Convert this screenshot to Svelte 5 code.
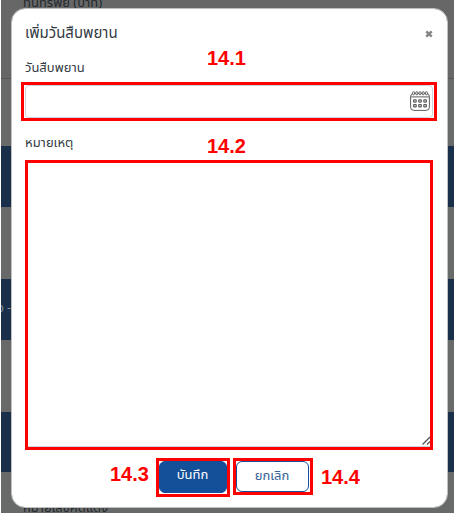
<script>
  const bands = [
    { h: 79, kind: 'line' },
    { h: 67, kind: 'gap' },
    { h: 61, kind: 'blue' },
    { h: 72, kind: 'gap' },
    { h: 61, kind: 'blue', text: 'อ -' },
    { h: 72, kind: 'gap' },
    { h: 60, kind: 'blue' },
    { h: 41, kind: 'gap' }
  ];
  const marks = [
    { text: '14.1', x: 207, y: 47 },
    { text: '14.2', x: 207, y: 135 },
    { text: '14.3', x: 110, y: 463 },
    { text: '14.4', x: 321, y: 466 }
  ];
</script>

<div class="screen">
  <div class="page">
    {#each bands as band}
      <div class="band {band.kind}" style="height: {band.h}px">{band.text ?? ''}</div>
    {/each}
    <span class="behind top">ทุนทรัพย์ (บาท)</span>
    <span class="behind bottom">หมายเลขคดีแดง</span>
  </div>

  <section class="modal">
    <header>
      <h1>เพิ่มวันสืบพยาน</h1>
      <button class="close" aria-label="Close">
        <svg width="8" height="8" viewBox="0 0 8 8"><path d="M1.3 1.3 6.7 6.7M6.7 1.3 1.3 6.7" stroke="#858585" stroke-width="2.5" /></svg>
      </button>
    </header>
    <div class="label date-label">วันสืบพยาน</div>
    <div class="frame date">
      <div class="input">
        <svg width="20" height="20" viewBox="0 0 20 20" fill="none" stroke="#5c5c5c" stroke-width="1">
          <rect x=".6" y="2.4" width="18.8" height="17" rx="3.2" />
          <path d="M1 5.9H19" />
          {#each [3.6, 6.8, 10, 13.2, 16.4] as x}
            <rect x={x - 1} y=".7" width="2" height="3.1" rx="1" fill="#fff" />
          {/each}
          {#each [9.9, 14.7] as y}
            {#each [4.9, 10, 15.1] as x}
              <rect x={x - 1.3} y={y - 1.1} width="2.6" height="2.3" rx=".5" stroke-width="1.2" />
            {/each}
          {/each}
        </svg>
      </div>
    </div>
    <div class="label note-label">หมายเหตุ</div>
    <div class="frame note">
      <div class="area">
        <svg width="8" height="9" viewBox="0 0 8 9"><path d="M.5 8.5 8 1M5 8.5 8 5.5" stroke="#555" stroke-width="1.3" /></svg>
      </div>
    </div>
    <footer>
      <div class="frame save"><button><span>บันทึก</span></button></div>
      <div class="frame cancel"><button><span>ยกเลิก</span></button></div>
    </footer>
  </section>

  {#each marks as mark}
    <b class="mark" style="left: {mark.x}px; top: {mark.y}px">{mark.text}</b>
  {/each}
</div>

<style>
  .screen {
    position: relative;
    width: 454px;
    height: 513px;
    overflow: hidden;
    background: #fff;
    font-family: "Noto Sans Thai", Kanit, Prompt, "Noto Sans", sans-serif;
    color: #333b43;
  }
  .page { height: 513px; margin-left: 1px; background: #686a6a; }
  .band { box-sizing: border-box; font-size: 12px; line-height: 58px; color: #8d959d; white-space: nowrap; text-indent: -4px; overflow: hidden; }
  .line { background: #676767; border-bottom: 1px solid #575757; }
  .blue { background: #1a2f4a; }
  .behind { position: absolute; left: 23px; font-size: 13px; line-height: 20px; color: #24292e; white-space: nowrap; }
  .top { top: -7px; }
  .bottom { top: 498px; }
  .modal {
    position: absolute;
    left: 11px;
    top: 8px;
    box-sizing: border-box;
    width: 437px;
    height: 500px;
    border: 1px solid #bfc1c1;
    border-radius: 14px;
    background: #fff;
    background-clip: padding-box;
    display: flex;
    flex-direction: column;
  }
  header { display: flex; justify-content: space-between; align-items: center; height: 49px; padding: 0 14px 0 13px; }
  h1 { margin: 0; font-size: 15px; font-weight: 400; line-height: 20px; }
  .close { padding: 0; border: 0; background: none; width: 8px; height: 8px; display: flex; }
  .label { margin-left: 13px; font-size: 13px; line-height: 20px; height: 20px; white-space: nowrap; }
  .date-label { margin-bottom: 4px; }
  .frame { box-sizing: border-box; border: 3px solid #f00; }
  .date { width: 416px; height: 39px; margin-left: 9px; padding-left: 1px; }
  .input {
    box-sizing: border-box;
    width: 408px;
    height: 33px;
    border: 1px solid #ced4da;
    border-radius: 4px;
    display: flex;
    align-items: center;
    justify-content: flex-end;
    padding: 0 2px 1px 0;
  }
  .note-label { margin: 12px 0 7px 13px; }
  .note { width: 408px; height: 290px; margin-left: 13px; }
  .area {
    box-sizing: border-box;
    height: 284px;
    border-bottom: 1px solid #ced4da;
    display: flex;
    align-items: flex-end;
    justify-content: flex-end;
    padding: 0 0 1px;
  }
  footer { display: flex; align-items: flex-start; gap: 3px; margin: 8px 0 0 144px; }
  .save { width: 74px; height: 39px; }
  .cancel { width: 80px; height: 37px; }
  footer button {
    box-sizing: border-box;
    display: flex;
    align-items: center;
    justify-content: center;
    padding: 0 1px 4px 0;
    border: 1px solid #14509a;
    border-radius: 6px;
    font: 13px/20px "Noto Sans Thai", Kanit, Prompt, "Noto Sans", sans-serif;
  }
  .save button { width: 68px; height: 32px; background: #14509a; color: #fff; }
  .cancel button { width: 73px; height: 31px; padding-bottom: 2px; background: #fff; color: #356295; }
  .mark { position: absolute; font: bold 20px/22px "Liberation Sans", Arial, sans-serif; color: #f00; }
</style>
